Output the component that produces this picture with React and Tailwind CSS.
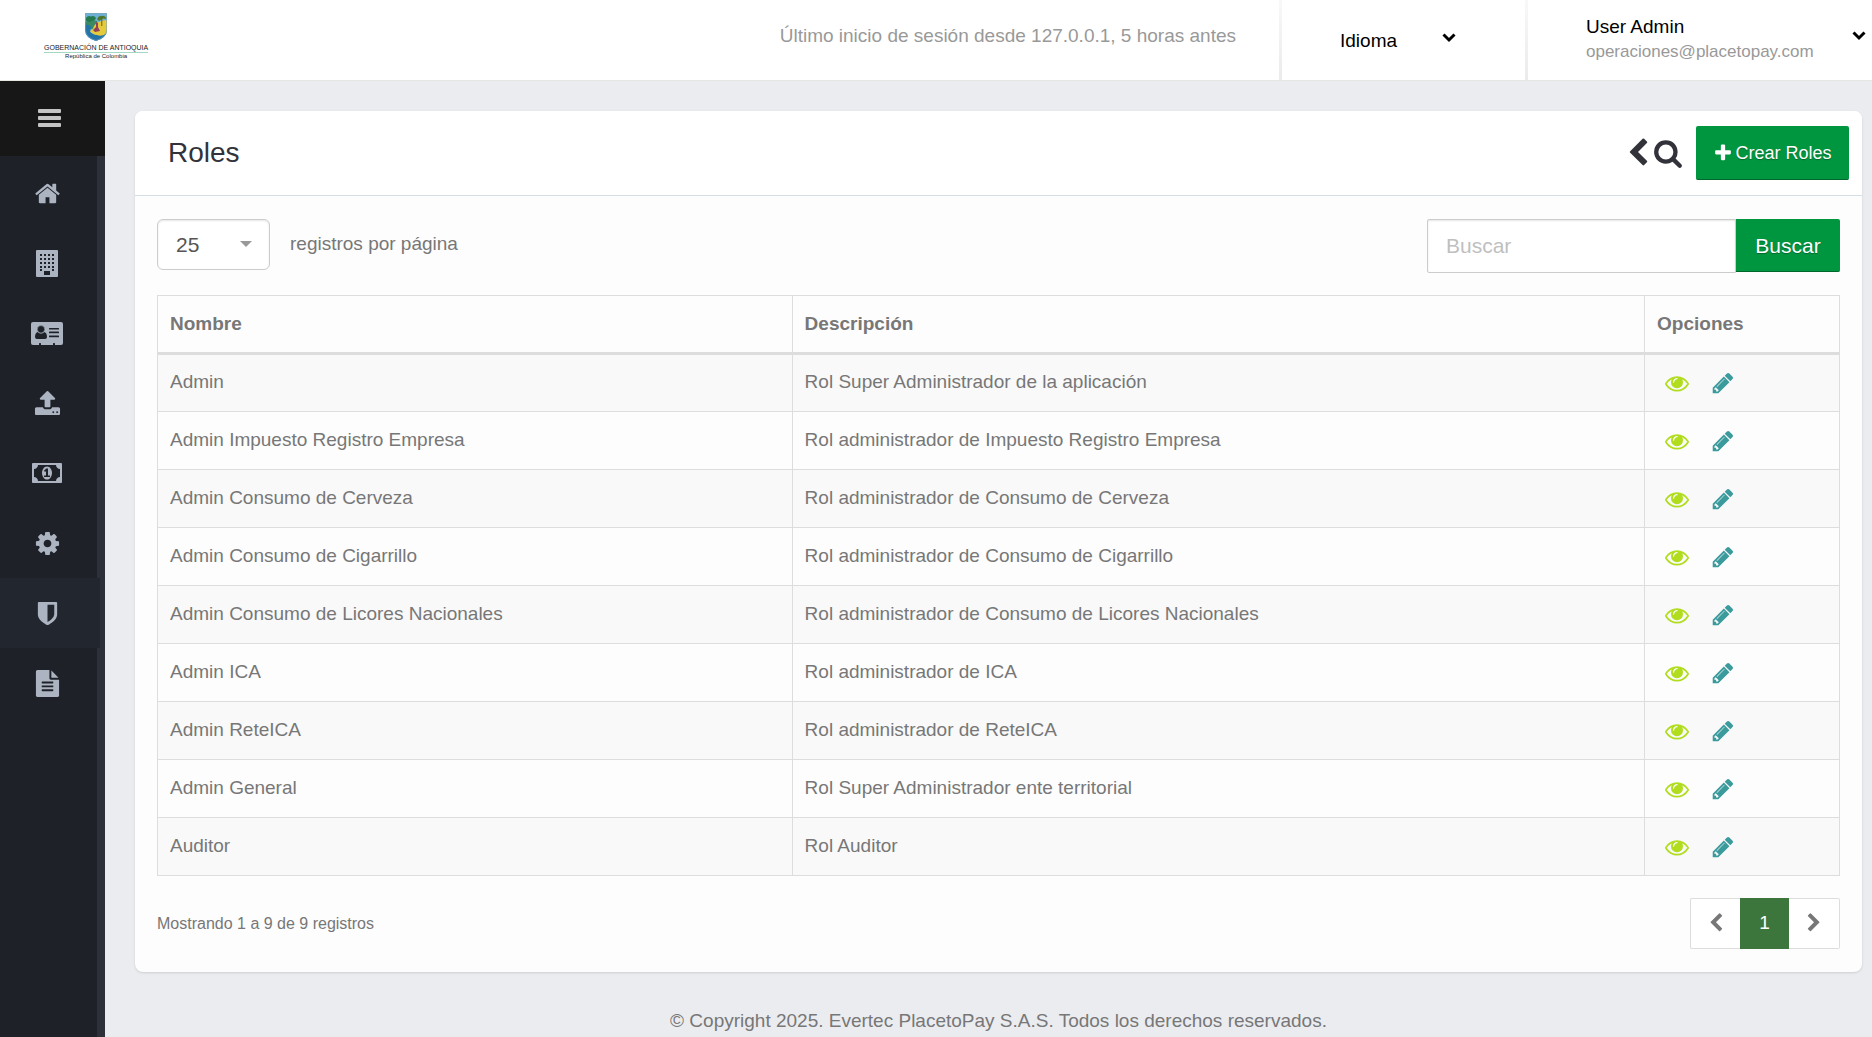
import React from "react";

const ICONS = {
  home: { w: 1792, d: "M1472 992v480q0 26-19 45t-45 19h-384v-384h-256v384h-384q-26 0-45-19t-19-45v-480q0-1 .5-3t.5-3l575-474 575 474q1 2 1 6zm223-69l-62 74q-8 9-21 11h-3q-13 0-21-7l-692-577-692 577q-12 8-24 7-13-2-21-11l-62-74q-8-10-7-23.5t11-21.5l719-599q32-26 76-26t76 26l244 204v-195q0-14 9-23t23-9h192q14 0 23 9t9 23v408l219 182q10 8 11 21.5t-7 23.5z" },
  upload: { w: 1792, d: "M1344 1472q0-26-19-45t-45-19-45 19-19 45 19 45 45 19 45-19 19-45zm256 0q0-26-19-45t-45-19-45 19-19 45 19 45 45 19 45-19 19-45zm128-224v320q0 40-28 68t-68 28h-1472q-40 0-68-28t-28-68v-320q0-40 28-68t68-28h427q21 56 70.5 92t110.5 36h256q61 0 110.5-36t70.5-92h427q40 0 68 28t28 68zm-325-648q-17 40-59 40h-256v448q0 26-19 45t-45 19h-256q-26 0-45-19t-19-45v-448h-256q-42 0-59-40-17-39 14-69l448-448q18-19 45-19t45 19l448 448q31 30 14 69z" },
  money: { w: 1920, d: "M768 1152h384v-96h-128v-448h-114l-148 137 77 80q42-37 55-57h2v288h-128v96zm512-256q0 70-21 142t-59.5 134-101.5 101-138 39-138-39-101.5-101-59.5-134-21-142 21-142 59.5-134 101.5-101 138-39 138 39 101.5 101 59.5 134 21 142zm512 256v-512q-106 0-181-75t-75-181h-1152q0 106-75 181t-181 75v512q106 0 181 75t75 181h1152q0-106 75-181t181-75zm128-832v1152q0 26-19 45t-45 19h-1792q-26 0-45-19t-19-45v-1152q0-26 19-45t45-19h1792q26 0 45 19t19 45z" },
  cog: { w: 1792, d: "M1152 896q0-106-75-181t-181-75-181 75-75 181 75 181 181 75 181-75 75-181zm512-109v222q0 12-8 23t-20 13l-185 28q-19 54-39 91 35 50 107 138 10 12 10 25t-9 23q-27 37-99 108t-94 71q-12 0-26-9l-138-108q-44 23-91 38-16 136-29 186-7 28-36 28h-222q-14 0-24.5-8.5t-11.5-21.5l-28-184q-49-16-90-37l-141 107q-10 9-25 9-14 0-25-11-126-114-165-168-7-10-7-23 0-12 8-23 15-21 51-66.5t54-70.5q-27-50-41-99l-183-27q-13-2-21-12.5t-8-23.5v-222q0-12 8-23t19-13l186-28q14-46 39-92-40-57-107-138-10-12-10-24 0-10 9-23 26-36 98.5-107.5t94.5-71.5q13 0 26 10l138 107q44-23 91-38 16-136 29-186 7-28 36-28h222q14 0 24.5 8.5t11.5 21.5l28 184q49 16 90 37l142-107q9-9 24-9 13 0 25 10 129 119 165 170 7 8 7 22 0 12-8 23-15 21-51 66.5t-54 70.5q26 50 41 98l183 28q13 2 21 12.5t8 23.5z" },
  shield: { w: 1792, d: "M1344 960v-640h-448v1137q119-63 213-137 235-184 235-360zm192-768v768q0 86-33.5 170.5t-83 150-118 127.5-126.5 103-121 77.5-89.5 49.5-42.5 20q-12 6-26 6t-26-6q-16-7-42.5-20t-89.5-49.5-121-77.5-126.5-103-118-127.5-83-150-33.5-170.5v-768q0-26 19-45t45-19h1152q26 0 45 19t19 45z" },
  file: { w: 1792, d: "M1596 476q14 14 28 36h-472v-472q22 14 36 28zm-476 164h544v1056q0 40-28 68t-68 28h-1344q-40 0-68-28t-28-68v-1600q0-40 28-68t68-28h800v544q0 40 28 68t68 28zm160 736v-64q0-14-9-23t-23-9h-704q-14 0-23 9t-9 23v64q0 14 9 23t23 9h704q14 0 23-9t9-23zm0-256v-64q0-14-9-23t-23-9h-704q-14 0-23 9t-9 23v64q0 14 9 23t23 9h704q14 0 23-9t9-23zm0-256v-64q0-14-9-23t-23-9h-704q-14 0-23 9t-9 23v64q0 14 9 23t23 9h704q14 0 23-9t9-23z" },
  search: { w: 1792, d: "M1216 832q0-185-131.5-316.5t-316.5-131.5-316.5 131.5-131.5 316.5 131.5 316.5 316.5 131.5 316.5-131.5 131.5-316.5zm512 832q0 52-38 90t-90 38q-54 0-90-38l-343-342q-179 124-399 124-143 0-273.5-55.5t-225-150-150-225-55.5-273.5 55.5-273.5 150-225 225-150 273.5-55.5 273.5 55.5 225 150 150 225 55.5 273.5q0 220-124 399l343 343q37 37 37 90z" },
  eye: { w: 1792, d: "M1664 960q-152-236-381-353 61 104 61 225 0 185-131.5 316.5t-316.5 131.5-316.5-131.5-131.5-316.5q0-121 61-225-229 117-381 353 133 205 333.5 326.5t434.5 121.5 434.5-121.5 333.5-326.5zm-720-384q0-20-14-34t-34-14q-125 0-214.5 89.5t-89.5 214.5q0 20 14 34t34 14 34-14 14-34q0-86 61-147t147-61q20 0 34-14t14-34zm848 384q0 34-20 69-140 230-376.5 368.5t-499.5 138.5-499.5-139-376.5-368q-20-35-20-69t20-69q140-229 376.5-368t499.5-139 499.5 139 376.5 368q20 35 20 69z" },
  pencil: { w: 1792, d: "M491 1536l91-91-235-235-91 91v107h128v128h107zm523-928q0-22-22-22-10 0-17 7l-542 542q-7 7-7 17 0 22 22 22 10 0 17-7l542-542q7-7 7-17zm-54-192l416 416-832 832h-416v-416zm683 96q0 53-37 90l-166 166-416-416 166-165q36-38 90-38 53 0 91 38l235 234q37 39 37 91z" },
  left: { w: 1792, d: "M1427 301l-531 531 531 531q19 19 19 45t-19 45l-166 166q-19 19-45 19t-45-19l-742-742q-19-19-19-45t19-45l742-742q19-19 45-19t45 19l166 166q19 19 19 45t-19 45z" },
  right: { w: 1792, d: "M365 301l531 531-531 531q-19 19-19 45t19 45l166 166q19 19 45 19t45-19l742-742q19-19 19-45t-19-45l-742-742q-19-19-45-19t-45 19l-166 166q-19 19-19 45t19 45z" },
  plus: { w: 1792, d: "M1600 736v192q0 40-28 68t-68 28h-416v416q0 40-28 68t-68 28h-192q-40 0-68-28t-28-68v-416h-416q-40 0-68-28t-28-68v-192q0-40 28-68t68-28h416v-416q0-40 28-68t68-28h192q40 0 68 28t28 68v416h416q40 0 68 28t28 68z" },
};

function Icon({ name, className }) {
  const { w, d } = ICONS[name];
  return (
    <svg viewBox={`0 0 ${w} 1792`} className={className} fill="currentColor" aria-hidden="true">
      <path d={d} />
    </svg>
  );
}

function Building() {
  const cols = [4, 8, 12, 16];
  return (
    <svg viewBox="0 0 22 27" className="h-[27px] w-[22px]" aria-hidden="true">
      <rect width="22" height="27" rx="1" fill="#acb4c1" />
      <g fill="#1e2128">
        {[4, 8, 12, 16].map((y) => cols.map((x) => <rect key={`${x}-${y}`} x={x} y={y} width="2" height="2" />))}
        <rect x="4" y="19" width="2" height="2" />
        <rect x="16" y="19" width="2" height="2" />
        <rect x="8" y="21" width="6" height="4" />
      </g>
    </svg>
  );
}

function AddressCard() {
  return (
    <svg viewBox="0 0 32 23" className="h-[23px] w-8" aria-hidden="true">
      <rect width="32" height="23" rx="2" fill="#acb4c1" />
      <g fill="#1e2128">
        <path d="M6.500 10Q10 13 13.500 10Q16 11 16 15Q16 17 14 17H6Q4 17 4 15Q4 11 6.500 10Z" />
        <circle cx="10" cy="7.300" r="3.700" stroke="#acb4c1" strokeWidth=".5" />
        <rect x="18" y="6" width="10" height="1.500" rx=".5" />
        <rect x="18" y="9.500" width="10" height="1.800" rx=".5" />
        <rect x="18" y="13.500" width="10" height="1.800" rx=".5" />
        <rect x="8" y="21" width="2" height="2" rx=".5" />
        <rect x="22" y="21" width="2" height="2" rx=".5" />
      </g>
    </svg>
  );
}

function Emblem() {
  return (
    <svg viewBox="0 0 22 28" className="h-7 w-[22px]" aria-hidden="true">
      <defs>
        <clipPath id="shield">
          <path d="M0 0H22V17Q21.500 25 11 28Q.5 25 0 17Z" />
        </clipPath>
      </defs>
      <g clipPath="url(#shield)">
        <rect width="22" height="28" fill="#6fb0d6" />
        <path d="M0 9L8 7L12 8V16H0Z" fill="#3b8a63" />
        <path d="M0 12Q4 11 6 14L5 19Q8 22 13 22Q19 21 22 17V28H0Z" fill="#2273a8" />
        <path d="M22 7V20Q17 24 12 22Q7 21 5 18Q8 17 9 13Q12 8 22 7Z" fill="#e5ca3c" />
        <path d="M1 5Q3 2 6 3.500Q9 2 11 5Q10 8 7 8Q4 10 1 8Z" fill="#267b4e" />
        <path d="M12 6Q14 2 17 3Q20 2 21.500 6L18 5.500L14 8Z" fill="#4d7a2b" />
        <path d="M16.800 4.500V13" stroke="#765722" strokeWidth="1" />
        <path d="M11 9L13 10L13 14L15 18L10 19L8 17L11 14Z" fill="#92405c" />
      </g>
      <path d="M.5 .5H21.500V17Q21 24.500 11 27.500Q1 24.500 .5 17Z" fill="none" stroke="#7ba6b4" strokeWidth=".6" />
    </svg>
  );
}

function Caret() {
  return (
    <svg viewBox="0 0 14 10" className="h-[10px] w-[14px] shrink-0" fill="none" stroke="currentColor" strokeWidth="3" aria-hidden="true">
      <path d="M1.500 1.500L7 7L12.500 1.500" />
    </svg>
  );
}

const MENU = [
  { label: "Inicio", icon: <Icon name="home" className="size-[27px]" /> },
  { label: "Entidades", icon: <Building /> },
  { label: "Contribuyentes", icon: <AddressCard /> },
  { label: "Cargas", icon: <Icon name="upload" className="size-[27px]" /> },
  { label: "Pagos", icon: <Icon name="money" className="h-7 w-[30px]" /> },
  { label: "Configuración", icon: <Icon name="cog" className="size-[27px]" /> },
  { label: "Roles", icon: <Icon name="shield" className="size-[27px]" />, active: true },
  { label: "Reportes", icon: <Icon name="file" className="size-[27px]" /> },
];

const ROLES = [
  ["Admin", "Rol Super Administrador de la aplicación"],
  ["Admin Impuesto Registro Empresa", "Rol administrador de Impuesto Registro Empresa"],
  ["Admin Consumo de Cerveza", "Rol administrador de Consumo de Cerveza"],
  ["Admin Consumo de Cigarrillo", "Rol administrador de Consumo de Cigarrillo"],
  ["Admin Consumo de Licores Nacionales", "Rol administrador de Consumo de Licores Nacionales"],
  ["Admin ICA", "Rol administrador de ICA"],
  ["Admin ReteICA", "Rol administrador de ReteICA"],
  ["Admin General", "Rol Super Administrador ente territorial"],
  ["Auditor", "Rol Auditor"],
];

function Divider() {
  return <div className="w-[3px] self-stretch bg-linear-to-b from-[#f8f8f8] to-[#ebebeb]" />;
}

function Header() {
  return (
    <header className="flex h-[81px] items-stretch border-b border-[#e4e7e2] bg-white">
      <a href="#inicio" className="ml-11 flex flex-col items-center self-start pt-[13px] text-[#222]">
        <Emblem />
        <span className="mt-[3px] border-b border-[#a5d8c2] text-[7px] leading-[8px] whitespace-nowrap">GOBERNACIÓN DE ANTIOQUIA</span>
        <span className="text-[6px] leading-[7px]">República de Colombia</span>
      </a>
      <p className="mr-[43px] ml-auto pt-[22px] text-[19px] leading-[27px] text-[#999]">
        Último inicio de sesión desde 127.0.0.1, 5 horas antes
      </p>
      <Divider />
      <button type="button" className="flex w-[243px] items-start pt-[27px] pl-[58px] text-[19px] leading-[27px] text-black">
        Idioma
        <span className="mt-[6px] ml-[45px]"><Caret /></span>
      </button>
      <Divider />
      <button type="button" className="flex w-[344px] items-start justify-between pt-[13px] pr-[6px] pl-[58px] text-left">
        <span className="block">
          <span className="block text-[19px] leading-[27px] text-black">User Admin</span>
          <span className="block text-[17px] leading-6 text-[#999]">operaciones@placetopay.com</span>
        </span>
        <span className="mt-[18px] text-black"><Caret /></span>
      </button>
    </header>
  );
}

function Sidebar() {
  return (
    <aside className="w-[105px] shrink-0 bg-[#1e2128]">
      <button type="button" aria-label="Menú" className="flex h-[75px] w-full items-center bg-[#171717] pb-[2px] pl-[38px] text-[#c4c4c4]">
        <svg viewBox="0 0 23 18" className="h-[18px] w-[23px]" fill="currentColor" aria-hidden="true">
          <rect width="23" height="4" rx="1" />
          <rect y="7" width="23" height="4" rx="1" />
          <rect y="14" width="23" height="4" rx="1" />
        </svg>
      </button>
      <nav className="h-[calc(100%-75px)] bg-linear-to-r from-[#1e2128] from-[97px] to-[#2d3038] to-[97px] pt-[2px] text-[#acb4c1]">
        {MENU.map((m) => (
          <a
            key={m.label}
            href={`#${m.label}`}
            aria-label={m.label}
            className={`flex h-[70px] w-[100px] items-center justify-center pr-[6px] ${m.active ? "bg-[#22262e]" : ""}`}
          >
            {m.icon}
          </a>
        ))}
      </nav>
    </aside>
  );
}

export default function App() {
  return (
    <div className="flex min-h-screen flex-col bg-[#ebecf0] font-['Liberation_Sans',Arial,sans-serif] text-[#777]">
      <Header />
      <div className="flex flex-1">
        <Sidebar />
        <main className="min-w-0 flex-1 pt-[30px] pr-[10px] pl-[30px]">
          <section className="rounded-lg bg-[#fdfdfd] shadow-sm">
            <div className="flex h-[85px] items-center rounded-t-lg border-b border-[#d5dde5] bg-white pr-[13px] pl-[33px]">
              <h1 className="text-[28px] leading-9 text-[#32323a]">Roles</h1>
              <button type="button" aria-label="Volver" className="ml-auto text-[#32323a]"><Icon name="left" className="size-[30px]" /></button>
              <button type="button" aria-label="Filtrar" className="mr-[13px] text-[#32323a]"><Icon name="search" className="size-[30px]" /></button>
              <button type="button" className="flex h-[54px] w-[153px] items-center justify-center rounded-[2px] border-b border-[#00682c] bg-[#009640] text-lg text-white [text-shadow:0_1px_1px_rgba(0,0,0,0.3)]">
                <Icon name="plus" className="mr-[2px] size-5" />
                Crear Roles
              </button>
            </div>
            <div className="px-[22px] pt-[23px] pb-[23px]">
              <div className="flex items-start">
                <div className="relative">
                  <select id="per-page" defaultValue="25" className="h-[51px] w-[113px] appearance-none rounded-md border border-[#ccc] bg-white pl-[18px] text-[21px] text-[#555] shadow-[inset_0_1px_2px_rgba(0,0,0,0.1)]">
                    <option>10</option>
                    <option>25</option>
                    <option>50</option>
                  </select>
                  <svg viewBox="0 0 12 6" className="pointer-events-none absolute top-[22px] right-[18px] h-[6px] w-3" aria-hidden="true"><path d="M0 0H12L6 6Z" fill="#999" /></svg>
                </div>
                <label htmlFor="per-page" className="ml-5 pt-[11px] text-[19px] leading-[27px]">registros por página</label>
                <form className="ml-auto flex items-start" onSubmit={(e) => e.preventDefault()}>
                  <input aria-label="Buscar" placeholder="Buscar" className="h-[54px] w-[309px] rounded-l-[2px] border border-[#ccc] bg-white pl-[18px] text-[21px] text-[#555] shadow-[inset_0_1px_2px_rgba(0,0,0,0.1)] placeholder:text-[#bfbfbf]" />
                  <button type="submit" className="h-[53px] w-[104px] rounded-r-[2px] border-b border-[#00682c] bg-[#009640] pt-[2px] text-[21px] text-white [text-shadow:0_1px_1px_rgba(0,0,0,0.3)]">Buscar</button>
                </form>
              </div>
              <table className="mt-[22px] w-full table-fixed border-collapse border border-[#ddd] text-left text-[19px] leading-[27px]">
                <colgroup>
                  <col className="w-[37.73%]" />
                  <col className="w-[50.68%]" />
                  <col />
                </colgroup>
                <thead>
                  <tr className="h-[58px] border-b-3 border-[#ddd]">
                    <th className="border-r border-[#ddd] px-3 pb-[2px]">Nombre</th>
                    <th className="border-r border-[#ddd] px-3 pb-[2px]">Descripción</th>
                    <th className="px-3 pb-[2px]">Opciones</th>
                  </tr>
                </thead>
                <tbody>
                  {ROLES.map(([name, desc]) => (
                    <tr key={name} className="h-[58px] border-t border-[#ddd] odd:bg-[#f9f9f9]">
                      <td className="border-r border-[#ddd] px-3 pb-[3px]">{name}</td>
                      <td className="border-r border-[#ddd] px-3 pb-[3px]">{desc}</td>
                      <td className="pl-5">
                        <div className="flex items-center gap-[22px]">
                          <a href="#ver" aria-label={`Ver ${name}`} className="text-[#b1dd1f]"><Icon name="eye" className="size-6" /></a>
                          <a href="#editar" aria-label={`Editar ${name}`} className="text-[#3b9a9c]"><Icon name="pencil" className="size-6" /></a>
                        </div>
                      </td>
                    </tr>
                  ))}
                </tbody>
              </table>
              <div className="mt-[22px] flex h-[51px] items-center justify-between">
                <p className="text-base">Mostrando 1 a 9 de 9 registros</p>
                <nav aria-label="Paginación" className="flex h-full w-[150px] text-[19px]">
                  <button type="button" aria-label="Anterior" className="flex w-[50px] items-center justify-center rounded-l-[2px] border border-r-0 border-[#ddd] bg-white pb-[2px]"><Icon name="left" className="size-5" /></button>
                  <button type="button" aria-current="page" className="w-[49px] bg-[#3c763d] text-white">1</button>
                  <button type="button" aria-label="Siguiente" className="flex flex-1 items-center justify-center rounded-r-[2px] border border-l-0 border-[#ddd] bg-white pb-[2px]"><Icon name="right" className="size-5" /></button>
                </nav>
              </div>
            </div>
          </section>
          <footer className="pt-[35px] pb-1 text-center text-[19px] leading-[27px]">
            © Copyright 2025. Evertec PlacetoPay S.A.S. Todos los derechos reservados.
          </footer>
        </main>
      </div>
    </div>
  );
}
